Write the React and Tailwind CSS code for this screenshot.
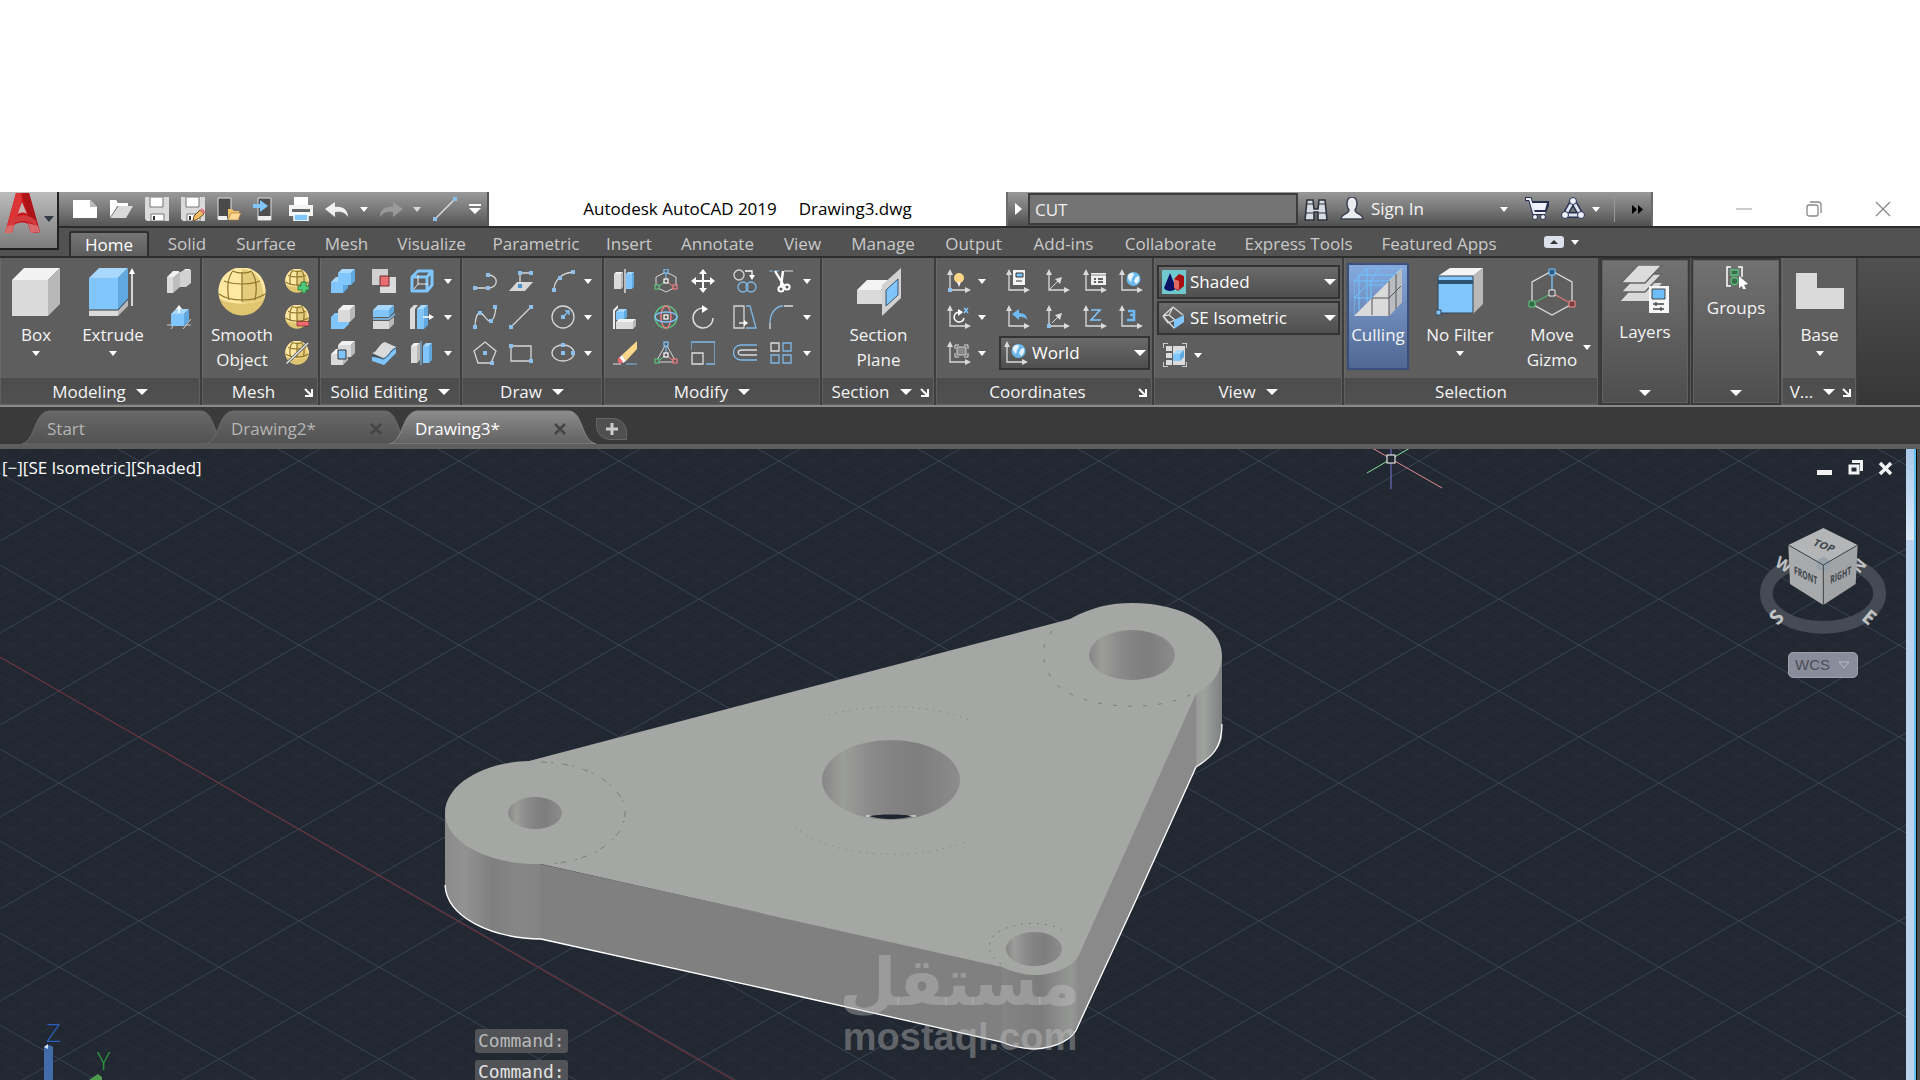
import React from "react";

const BLUE = "#80c5fb";
const LIGHT = "#dadada";

/* ---------- small drawing helpers ---------- */

function Icon({ size = 24, box, children }) {
  return (
    <svg width={size} height={size} viewBox={box || `0 0 ${size} ${size}`} fill="none" className="shrink-0" aria-hidden="true">
      {children}
    </svg>
  );
}

function Node({ x, y, c = "#8cc0ea" }) {
  return <rect x={x - 2} y={y - 2} width="4" height="4" fill={c} />;
}

function Caret({ wide = false, className = "" }) {
  return wide ? (
    <svg width="12" height="6" viewBox="0 0 12 6" className={`shrink-0 ${className}`} aria-hidden="true">
      <path d="M0 0H12L6 6Z" fill="#fff" />
    </svg>
  ) : (
    <svg width="8" height="5" viewBox="0 0 8 5" className={`shrink-0 ${className}`} aria-hidden="true">
      <path d="M0 0H8L4 5Z" fill="#fff" />
    </svg>
  );
}

function Launcher() {
  return (
    <button aria-label="Panel settings" className="flex w-[13px] items-center justify-start">
      <svg width="9" height="9" viewBox="0 0 9 9" fill="none" aria-hidden="true">
        <path d="M1 1L7 7M8 1V8H1" stroke="#fff" strokeWidth="2" />
      </svg>
    </button>
  );
}

function Cube({ x, y, w, h, d, front = LIGHT, top = "#f2f2f2", side = "#b8b8b8" }) {
  return (
    <g>
      <path d={`M${x} ${y + d}H${x + w}V${y + h}H${x}Z`} fill={front} />
      <path d={`M${x} ${y + d}L${x + d} ${y}H${x + w + d}L${x + w} ${y + d}Z`} fill={top} />
      <path d={`M${x + w} ${y + d}L${x + w + d} ${y}V${y + h - d}L${x + w} ${y + h}Z`} fill={side} />
    </g>
  );
}

function BlueCube(props) {
  return <Cube {...props} front={BLUE} top="#a9d8ff" side="#5fa8e0" />;
}

/* ---------- quick access icons ---------- */

const qat = {
  New: (
    <Icon>
      <path d="M0 3H17L24 10V21H0Z" fill="#fff" />
      <path d="M17 3V10H24Z" fill="#b9b9b9" />
    </Icon>
  ),
  Open: (
    <Icon>
      <path d="M1 21V3H7L9 6H19V9H8L3 21Z" fill="#fff" />
      <path d="M9 9H24L17 21H1Z" fill={LIGHT} />
      <path d="M9 9L1 21" stroke="#777" />
    </Icon>
  ),
  Save: (
    <Icon>
      <path d="M0 0H24V24H2L0 22Z" fill={LIGHT} />
      <path d="M5 0H18V10H5Z" fill="#fff" stroke="#777" />
      <path d="M6 17H19V24H6Z" fill="#fff" stroke="#777" />
      <path d="M8 19H10V23H8Z" fill="#333" />
    </Icon>
  ),
  "Save As": (
    <Icon>
      <path d="M0 0H24V24H2L0 22Z" fill={LIGHT} />
      <path d="M5 0H18V10H5Z" fill="#fff" stroke="#777" />
      <path d="M6 17H19V24H6Z" fill="#fff" stroke="#777" />
      <path d="M8 19H10V23H8Z" fill="#333" />
      <path d="M12 24L13 19L19 13L23 17L17 22Z" fill="#f2bd62" stroke="#6a4a20" />
      <path d="M19 13L21 11L25 15L23 17Z" fill="#e8808a" />
    </Icon>
  ),
  "Open from Mobile": (
    <Icon>
      <path d="M1 1H14V22H1Z" fill="#4a4a4a" stroke="#ddd" />
      <path d="M1 19H10V23H1Z" fill="#eee" />
      <path d="M11 23V12H15L17 14H22V23Z" fill="#f3c068" />
      <path d="M14 16H24L21 23H11Z" fill="#ffd993" stroke="#9b7430" strokeWidth=".6" />
    </Icon>
  ),
  "Save to Mobile": (
    <Icon>
      <path d="M5 1H18V23H5Z" fill="#4f4f4f" stroke="#ddd" />
      <path d="M5 19H18V23H5Z" fill="#eee" />
      <path d="M0 7H7V3L15 9L7 15V11H0Z" fill={BLUE} />
    </Icon>
  ),
  Plot: (
    <Icon>
      <path d="M5 0H19V8H5Z" fill="#fff" />
      <path d="M0 8H24V19H0Z" fill="#f4f4f4" />
      <path d="M3 12H21V15H3Z" fill="#666" />
      <path d="M5 17H19V24H5Z" fill={BLUE} stroke="#fff" strokeWidth="1.5" />
    </Icon>
  ),
  Undo: (
    <Icon>
      <path d="M0 12L10 5V10C18 9 23 13 23 20C20 15 16 14 10 15V20Z" fill="#f0f0f0" />
    </Icon>
  ),
  Redo: (
    <Icon>
      <path d="M24 12L14 5V10C6 9 1 13 1 20C4 15 8 14 14 15V20Z" fill="#9a9a9a" />
    </Icon>
  ),
  Line: (
    <Icon>
      <path d="M2 22L23 1" stroke="#ddd" strokeWidth="1.5" />
      <Node x={2} y={22} />
      <Node x={22} y={2} />
    </Icon>
  ),
};

/* ---------- ribbon icons ---------- */

const BoxIcon = (
  <Icon size={48}>
    <Cube x={0} y={0} w={36} h={48} d={12} />
  </Icon>
);
const ExtrudeIcon = (
  <Icon size={48}>
    <Cube x={0} y={31} w={29} h={17} d={10} />
    <BlueCube x={0} y={0} w={29} h={42} d={10} />
    <path d="M0 42H29L39 31" stroke="#3a3a3a" />
    <path d="M43 38V4" stroke="#fff" strokeWidth="1.5" />
    <path d="M43 0L40 6H46Z" fill="#fff" />
  </Icon>
);
const Polysolid = (
  <Icon>
    <path d="M0 8L6 2H12V6L18 0H24L18 3H13L6 9Z" fill="#f2f2f2" />
    <path d="M0 8H6V24H0Z" fill={LIGHT} />
    <path d="M6 9L13 3V18L6 24Z" fill="#bdbdbd" />
    <path d="M13 3L18 1H24V14L19 18H13Z" fill="#d2d2d2" />
  </Icon>
);
const Presspull = (
  <Icon>
    <path d="M0 20H24M4 24L8 18M16 24L24 14" stroke="#ccc" />
    <BlueCube x={4} y={4} w={13} h={17} d={5} />
    <path d="M12 8V3" stroke="#fff" strokeWidth="1.5" />
    <path d="M12 0L9 4H15Z" fill="#fff" />
  </Icon>
);

function Globe({ size, children }) {
  return (
    <Icon size={size} box="0 0 48 48">
      <circle cx="24" cy="24" r="23.5" fill="#e0c570" />
      <path d="M2 31A23.5 23.5 0 1 1 46 31C36 37 12 37 2 31Z" fill="#ffe9a2" />
      <path d="M24 32V1C38 2 45 12 46 31C40 34 32 35 24 35Z" fill="#e4cc7c" />
      <path d="M14 3C22 6 28 6 34 3M6 13C16 17 32 17 42 13M1 26C12 34 36 34 47 26M24 4V34M14 4C9 12 9 22 11 32M34 4C39 12 39 22 37 32" stroke="#8c742c" strokeWidth={size > 24 ? 1.2 : 2.4} />
      {children}
    </Icon>
  );
}

const meshSmall = [
  <Globe key="a" size={24}>
    <path d="M32 26H42V34H48V42H42V48H34V42H26V34H32Z" fill="#4fc878" stroke="#1f6d38" strokeWidth="1.5" />
  </Globe>,
  <Globe key="b" size={24}>
    <path d="M24 33H48V42H24Z" fill="#ec6a70" stroke="#7d2d30" strokeWidth="1.5" />
  </Globe>,
  <Globe key="c" size={24}>
    <path d="M3 45L46 4" stroke="#555" strokeWidth="6" />
    <path d="M3 45L46 4" stroke="#e6e6e6" strokeWidth="3" />
  </Globe>,
];

const solidIcons = [
  <Icon>
    <BlueCube x={0} y={8} w={12} h={16} d={5} />
    <BlueCube x={7} y={0} w={13} h={16} d={4} />
  </Icon>,
  <Icon>
    <path d="M0 0H16V16H0Z" fill="#d0d0d0" />
    <path d="M8 8H24V24H8Z" fill="#dcdcdc" />
    <path d="M8 7H17V17H8Z" fill="#ea6d72" stroke="#6b2b2e" />
  </Icon>,
  <Icon>
    <path d="M2 8H17V22H2ZM2 8L8 2H22L17 8M22 2V16L17 22" stroke={BLUE} strokeWidth="3" strokeLinejoin="round" />
    <path d="M8 6V15H18M8 15L4 20" stroke="#eee" />
  </Icon>,
  <Icon>
    <path d="M0 12L4 8H10V17H15L18 15V19L13 24H0Z" fill={BLUE} />
    <Cube x={7} y={0} w={12} h={17} d={5} />
  </Icon>,
  <Icon>
    <BlueCube x={1} y={0} w={16} h={12} d={5} />
    <path d="M1 14H17L23 9" stroke={BLUE} strokeWidth="1.5" />
    <path d="M1 16H17V24H1Z" fill={LIGHT} />
    <path d="M17 16L22 12V19L17 24Z" fill="#b8b8b8" />
  </Icon>,
  <Icon>
    <path d="M0 4L4 0H8L5 4V24H0Z" fill={LIGHT} />
    <BlueCube x={7} y={0} w={7} h={24} d={4} />
    <path d="M13 12H21" stroke="#fff" strokeWidth="1.5" />
    <path d="M24 12L19 9V15Z" fill="#fff" />
  </Icon>,
  <Icon>
    <Cube x={0} y={8} w={12} h={16} d={5} />
    <Cube x={7} y={0} w={13} h={16} d={4} />
    <path d="M7 9H15V18H7Z" fill={BLUE} stroke="#333" />
  </Icon>,
  <Icon>
    <path d="M0 16L11 17L24 5V12L12 24L0 20Z" fill={BLUE} />
    <path d="M0 12C5 12 7 2 13 1L24 6C18 8 16 16 11 17Z" fill={LIGHT} />
    <path d="M0 14L11 18C16 17 18 10 24 7" stroke="#345" />
  </Icon>,
  <Icon>
    <Cube x={1} y={2} w={6} h={20} d={3} />
    <BlueCube x={13} y={2} w={6} h={20} d={3} />
    <path d="M11 0V24" stroke={BLUE} />
  </Icon>,
];

const S = "#d6d6d6";
const drawIcons = [
  <Icon>
    <path d="M2 19H15C26 19 26 6 15 6" stroke={S} strokeWidth="1.3" />
    <Node x={2} y={19} /><Node x={15} y={19} /><Node x={15} y={6} />
  </Icon>,
  <Icon>
    <path d="M8 13H24L16 22H0Z" fill={S} />
    <path d="M11 18V4H22" stroke={S} strokeWidth="1.3" />
    <Node x={11} y={17} c="#4f8fc4" /><Node x={11} y={4} /><Node x={22} y={4} />
  </Icon>,
  <Icon>
    <path d="M3 21C3 12 10 4 22 3" stroke={S} strokeWidth="1.3" />
    <Node x={3} y={21} /><Node x={9} y={9} /><Node x={22} y={3} />
  </Icon>,
  <Icon>
    <path d="M2 22C2 14 4 8 7 8C11 8 14 18 18 16C22 14 22 8 23 2" stroke={S} strokeWidth="1.3" />
    <Node x={2} y={22} /><Node x={7} y={8} /><Node x={18} y={16} /><Node x={22} y={2} />
  </Icon>,
  <Icon>
    <path d="M2 22L22 2" stroke={S} strokeWidth="1.3" />
    <Node x={2} y={22} /><Node x={22} y={2} />
  </Icon>,
  <Icon>
    <circle cx="12" cy="12" r="11" stroke={S} strokeWidth="1.3" />
    <path d="M12 12L18 6M14 6H18V10" stroke={BLUE} strokeWidth="1.3" />
    <Node x={12} y={12} />
  </Icon>,
  <Icon>
    <path d="M12 1L23 10L18 22H5L1 10Z" stroke={S} strokeWidth="1.3" />
    <Node x={12} y={12} /><Node x={19} y={22} />
  </Icon>,
  <Icon>
    <path d="M2 5H22V20H2Z" stroke={S} strokeWidth="1.3" />
    <Node x={2} y={5} /><Node x={22} y={20} />
  </Icon>,
  <Icon>
    <ellipse cx="12" cy="12" rx="11" ry="8" stroke={S} strokeWidth="1.3" />
    <Node x={12} y={4} /><Node x={12} y={12} /><Node x={22} y={12} />
  </Icon>,
];

function Sq({ x, y, c, f = "#5d5d5d" }) {
  return <rect x={x - 2} y={y - 2} width="4" height="4" stroke={c} fill={f} strokeWidth="1.2" />;
}

const modifyIcons = [
  <Icon>
    <Cube x={1} y={3} w={7} h={17} d={2} />
    <BlueCube x={13} y={3} w={6} h={17} d={2} />
    <path d="M12 0V24" stroke="#eee" strokeWidth="1.3" />
  </Icon>,
  <Icon>
    <path d="M12 3L22 8V18L12 23L2 18V8Z" stroke={S} />
    <path d="M12 12V3" stroke={BLUE} /><path d="M12 12L3 19" stroke="#5ac27c" /><path d="M12 12L21 19" stroke="#ef7d82" />
    <Sq x={12} y={2} c={BLUE} /><Sq x={3} y={18} c="#5ac27c" /><Sq x={21} y={18} c="#ef7d82" /><Sq x={12} y={12} c="#fff" />
  </Icon>,
  <Icon>
    <path d="M12 3V21M3 12H21" stroke="#fff" strokeWidth="2" />
    <path d="M12 0L8 5H16ZM12 24L8 19H16ZM0 12L5 8V16ZM24 12L19 8V16Z" fill="#fff" />
  </Icon>,
  <Icon>
    <circle cx="6" cy="6" r="5" stroke={S} strokeWidth="1.3" />
    <circle cx="10" cy="18" r="5" stroke="#7fb8e6" strokeWidth="1.3" /><circle cx="18" cy="18" r="5" stroke="#7fb8e6" strokeWidth="1.3" />
    <path d="M12 2H19V7" stroke="#fff" strokeWidth="1.3" /><path d="M19 11L16 6H22Z" fill="#fff" />
  </Icon>,
  <Icon>
    <path d="M0 2H10" stroke="#7fb8e6" strokeDasharray="4 2" /><path d="M15 2H24" stroke="#ddd" />
    <path d="M6 2L15 17M14 2L12 17" stroke="#fff" strokeWidth="2.4" />
    <circle cx="12" cy="20" r="2.6" stroke="#fff" strokeWidth="2" /><circle cx="18" cy="18" r="2.6" stroke="#fff" strokeWidth="2" />
  </Icon>,
  <Icon>
    <path d="M0 5L5 0V3L2 6V24H0Z" fill="#eee" />
    <BlueCube x={3} y={4} w={8} h={11} d={3} />
    <Cube x={3} y={14} w={17} h={10} d={3} />
  </Icon>,
  <Icon>
    <circle cx="12" cy="12" r="11" stroke="#5ac27c" strokeWidth="1.4" />
    <ellipse cx="12" cy="12" rx="5" ry="11" stroke="#ef7d82" strokeWidth="1.4" /><ellipse cx="12" cy="12" rx="11" ry="5" stroke={BLUE} strokeWidth="1.4" />
    <Sq x={12} y={12} c="#fff" />
  </Icon>,
  <Icon>
    <path d="M13 3A10 10 0 1 0 22 13" stroke="#ddd" strokeWidth="1.5" />
    <path d="M11 0L17 4L11 8Z" fill="#fff" />
  </Icon>,
  <Icon>
    <path d="M1 1H11V23H1Z" stroke={S} strokeWidth="1.3" /><path d="M13 1H17L23 23H13" stroke="#7fb8e6" strokeWidth="1.3" />
    <path d="M6 18H12" stroke="#fff" strokeWidth="1.3" /><path d="M15 18L11 15V21Z" fill="#fff" />
  </Icon>,
  <Icon>
    <path d="M1 18C1 8 7 1 14 1" stroke="#7fb8e6" strokeWidth="1.3" /><path d="M15 1H24M1 18V24" stroke="#ddd" strokeWidth="1.3" />
  </Icon>,
  <Icon>
    <path d="M0 23H8" stroke="#ddd" /><path d="M13 23H24" stroke="#7fb8e6" />
    <path d="M24 0V8L13 20L9 14Z" fill="#fbd68b" /><path d="M9 14L13 20L10 22L6 17Z" fill="#fff" />
    <path d="M6 16L10 21C8 24 4 22 5 18Z" fill="#ec6a70" />
  </Icon>,
  <Icon>
    <path d="M12 3L22 21H2Z" stroke={S} />
    <path d="M12 14V3" stroke={BLUE} /><path d="M12 14L3 21" stroke="#5ac27c" /><path d="M12 14L21 21" stroke="#ef7d82" />
    <Sq x={12} y={3} c={BLUE} /><Sq x={3} y={20} c="#5ac27c" /><Sq x={21} y={20} c="#ef7d82" /><Sq x={12} y={14} c="#fff" />
  </Icon>,
  <Icon>
    <path d="M0 9V1H24V23H15" stroke="#7fb8e6" strokeWidth="1.3" /><path d="M1 12H12V23H1Z" stroke="#ddd" strokeWidth="1.3" />
  </Icon>,
  <Icon>
    <path d="M24 4H8C-2 4 -2 19 8 19H24" stroke="#7fb8e6" strokeWidth="1.3" /><path d="M24 9H9C4 9 4 14 9 14H24" stroke="#ddd" strokeWidth="1.3" />
  </Icon>,
  <Icon>
    <path d="M2 2H10V10H2Z" stroke="#ddd" strokeWidth="1.3" />
    <path d="M14 2H22V10H14ZM2 14H10V22H2ZM14 14H22V22H14Z" stroke="#7fb8e6" strokeWidth="1.3" />
  </Icon>,
];

function Axes({ children }) {
  return (
    <Icon>
      <path d="M3 4V21H20" stroke={LIGHT} strokeWidth="1.3" />
      <path d="M3 0L0 6H6ZM24 21L18 18V24Z" fill={LIGHT} />
      {children}
    </Icon>
  );
}

function Earth() {
  return (
    <g>
      <circle cx="14.5" cy="10" r="7" fill="#6db9ea" />
      <path d="M9 6C12 3 15 3 15 6L13 9L12 13C10 12 8 8 9 6ZM17 8L20 7C21 11 19 14 17 15L15 12Z" fill="#e4f3ff" />
    </g>
  );
}

const ucsTop = [
  <Axes><circle cx="12" cy="9" r="5" fill="#ffd58a" /><path d="M10 13H14L12 18Z" fill="#f4f4f4" /><Node x={3} y={21} /></Axes>,
  <Caret />,
  <Axes><path d="M7 1H19V16H7Z" fill="#f4f4f4" /><path d="M10 4H17V8H10Z" fill={BLUE} stroke="#333" /><path d="M10 12H16" stroke="#333" /></Axes>,
  <Axes><path d="M3 21L12 12" stroke={LIGHT} /><path d="M16 8L9 10L14 15Z" fill={LIGHT} /></Axes>,
  <Axes><path d="M8 4H23V16H8Z" fill="#f0f0f0" /><path d="M8 6H23" stroke="#888" /><path d="M11 10H13M15 10H20M11 13H13M15 13H20" stroke="#333" strokeWidth="1.5" /></Axes>,
  <Axes><Earth /></Axes>,
  <Axes><path d="M15 8A5 5 0 1 0 17 13" stroke="#fff" strokeWidth="1.5" /><path d="M11 4L16 7L11 11Z" fill="#fff" /><path d="M17 3L21 8M21 3L17 8" stroke={BLUE} strokeWidth="1.5" /></Axes>,
  <Caret />,
  <Axes><path d="M6 9L13 4V8C19 8 21 11 21 15C19 12 17 12 13 12V15Z" fill="#6eb9f2" /></Axes>,
  <Axes><path d="M6 18L12 12" stroke={LIGHT} /><path d="M16 8L9 10L14 15Z" fill={LIGHT} /><Node x={3} y={21} /></Axes>,
  <Axes><path d="M8 5H17L8 15H18" stroke={BLUE} strokeWidth="1.6" /></Axes>,
  <Axes><path d="M9 6H15V10H11H15V15H8" stroke="#6eb9f2" strokeWidth="2.6" /></Axes>,
];
const ucsObject = (
  <Axes>
    <path d="M8 8V4H12M17 4H21V8M8 12V16H12M17 16H21V12" stroke="#ddd" />
    <path d="M10 6H19V14H10Z" fill="#888" stroke="#ccc" />
  </Axes>
);

const SectionIcon = (
  <Icon size={48}>
    <path d="M2 22L12 12H34L26 22Z" fill="#f4f4f4" />
    <path d="M2 22H27V36H2Z" fill={LIGHT} />
    <path d="M27 17L46 0V30L27 48Z" fill="#d2d2d2" />
    <path d="M31 22L43 11V27L31 38Z" fill={BLUE} stroke="#38536b" />
  </Icon>
);
const CullingIcon = (
  <Icon size={48}>
    <path d="M0 48L48 0V34L35 48Z" fill={LIGHT} />
    <path d="M35 48V13L48 0V34Z" fill="#b9bcc0" />
    <path d="M18 30V47M18 30H35M35 48V13M42 41V6M35 30L47 18" stroke="#555" />
    <path d="M0 48V13L13 0H47M0 13H34L47 0M1 30H18M17 13V30M0 30L13 17V0M5 42V7H40M13 17H30M25 0L17 13M13 17V34" stroke="#6fc4ff" />
  </Icon>
);
const FilterIcon = (
  <Icon size={48}>
    <path d="M2 8L14 0H47L37 8Z" fill="#f4f4f4" />
    <path d="M37 8L47 0V36L37 46Z" fill="#b9b9b9" />
    <path d="M2 8H37V45H2Z" fill={BLUE} stroke="#345" />
    <path d="M2 12H37V16H2Z" fill="#2d5372" />
    <path d="M0 42H5V47H0Z" fill={BLUE} stroke="#345" />
  </Icon>
);
const GizmoIcon = (
  <Icon size={48}>
    <path d="M24 3L44 14V36L24 47L4 36V14Z" stroke={LIGHT} strokeWidth="1.3" />
    <path d="M24 25V4" stroke={BLUE} strokeWidth="1.3" /><path d="M24 25L4 36" stroke="#4fae6c" strokeWidth="1.3" /><path d="M24 25L44 36" stroke="#e0757a" strokeWidth="1.3" />
    <path d="M21 1H27V7H21Z" fill="#2f5d86" stroke={BLUE} /><path d="M1 33H7V39H1Z" fill="#2f6b44" stroke="#65c885" />
    <path d="M41 33H47V39H41Z" fill="#7a3e41" stroke="#ef8a8f" /><path d="M21 22H27V28H21Z" fill="#555" stroke="#eee" />
  </Icon>
);
const LayersIcon = (
  <Icon size={48}>
    <path d="M17 18H41L24 36H0Z" fill="#d6d6d6" /><path d="M0 36L8 27H31V36Z" fill={LIGHT} />
    <path d="M17 9H41L24 27H0Z" fill={LIGHT} stroke="#666" strokeWidth="1.5" />
    <path d="M17 0H41L24 18H0Z" fill="#dcdcdc" stroke="#666" strokeWidth="1.5" />
    <path d="M28 21H48V48H28Z" fill="#f6f6f6" />
    <path d="M31 24H44V34H31Z" fill="#6dbdf8" stroke="#444" />
    <path d="M32 39H43M32 44H43M35 37V41M40 42V46" stroke="#444" strokeWidth="1.3" />
  </Icon>
);
const GroupsIcon = (
  <Icon>
    <path d="M7 2H3V21H7M14 2H18V12" stroke="#fff" strokeWidth="1.5" />
    <path d="M7 5H14V10H7Z" stroke="#5ac27c" strokeWidth="1.3" fill="#3c6a4a" /><circle cx="10.5" cy="16" r="3.5" stroke="#5ac27c" strokeWidth="1.3" fill="#3c6a4a" />
    <path d="M15 11L24 19L20 20L22 24L19 25L18 21L15 23Z" fill="#fff" />
  </Icon>
);
const BaseIcon = (
  <Icon size={48}>
    <path d="M0 5H21V20H48V41H0Z" fill={LIGHT} />
  </Icon>
);
const ViewportIcon = (
  <Icon>
    <path d="M0 5V0H5M19 0H24V5M0 19V24H5M19 24H24V19" stroke="#eee" strokeWidth="1.5" />
    <path d="M3 3H9V8H3ZM3 10H9V15H3ZM3 17H9V22H3ZM10 3H22V22H10Z" fill="#dcdcdc" />
    <BlueCube x={10} y={7} w={7} h={11} d={4} />
  </Icon>
);
const ShadedIcon = (
  <Icon>
    <rect width="24" height="24" fill="#6fc8cb" />
    <path d="M8 3L14 18C12 22 4 22 2 18Z" fill="#0b1266" />
    <path d="M12 9L17 4L22 6V16L16 21L12 18Z" fill="#a80d10" /><path d="M12 9L17 11V20L12 18Z" fill="#e06a64" />
  </Icon>
);
const IsoIcon = (
  <Icon>
    <path d="M1 10L11 1L21 9M1 10L12 22M1 10L7 9L11 1M7 9L13 14M1 10L6 17L13 14" stroke={LIGHT} strokeWidth="1.3" />
    <path d="M12 14L22 9V16L12 23Z" fill={BLUE} />
  </Icon>
);

/* ---------- ribbon parts ---------- */

function Panel({ title, width, menu = true, launcher = false, children }) {
  return (
    <section className={`flex shrink-0 flex-col border-r-2 border-[#3d3d3d] bg-[#5e5e5e] ${width}`}>
      <div className="flex flex-1 border-l border-[#696969]">{children}</div>
      <div className="flex h-[28px] border border-[#606060] bg-gradient-to-b from-[#4c4c4c] to-[#515151] pt-[2px]">
        <button className="flex min-w-0 flex-1 items-center justify-center gap-[10px] whitespace-nowrap">
          {title}
          {menu && <Caret wide />}
        </button>
        {launcher && <Launcher />}
      </div>
    </section>
  );
}

function BigTool({ icon, lines, width, caret = false }) {
  return (
    <button className={`flex flex-col items-center self-start pt-[10px] leading-[25px] ${width}`}>
      {icon}
      <span className="mt-[6px] flex flex-col">
        {lines.map((l) => (
          <span key={l}>{l}</span>
        ))}
      </span>
      {caret && <Caret className="mt-[4px]" />}
    </button>
  );
}

function ToolGrid({ items, cols, label, className = "" }) {
  return (
    <div className={`grid auto-rows-[24px] content-start items-center gap-y-[12px] pt-[11px] ${cols} ${className}`}>
      {items.map((it, i) => (
        <button key={i} aria-label={`${label} ${i + 1}`} className="justify-self-start">
          {it}
        </button>
      ))}
    </div>
  );
}

function withCarets(icons, n) {
  const out = [];
  icons.forEach((ic, i) => {
    out.push(ic);
    if (i % n === n - 1) out.push(<Caret />);
  });
  return out;
}

function Dropdown({ icon, value, label, width }) {
  return (
    <div className={`relative h-[34px] ${width}`}>
      <select aria-label={label} defaultValue={value} className="h-full w-full appearance-none border-2 border-[#333] bg-gradient-to-b from-[#6a6a6a] to-[#4f4f4f] pl-[31px] text-white">
        <option>{value}</option>
      </select>
      <span className="pointer-events-none absolute left-[5px] top-[5px]">{icon}</span>
      <Caret wide className="pointer-events-none absolute right-[4px] top-[14px]" />
    </div>
  );
}

function CollapsedPanel({ icon, label }) {
  return (
    <section className="flex w-[91px] shrink-0 border-r border-[#5a5a5a] bg-[#3a3a3a] px-[2px] pb-[2px] pt-[2px]">
      <button className="flex w-full flex-col items-center border border-[#606060] bg-gradient-to-b from-[#727272] to-[#4e4e4e] pt-[4px]">
        {icon}
        <span className="mt-[6px] leading-[25px]">{label}</span>
        <Caret wide className="mb-[6px] mt-auto" />
      </button>
    </section>
  );
}

function Ribbon() {
  return (
    <div className="flex h-[147px] overflow-hidden bg-gradient-to-b from-[#505050] to-[#363636] text-[17px] text-[#f4f4f4]">
      <Panel title="Modeling" width="w-[202px]">
        <BigTool icon={BoxIcon} lines={["Box"]} width="w-[70px]" caret />
        <BigTool icon={ExtrudeIcon} lines={["Extrude"]} width="w-[84px]" caret />
        <ToolGrid label="Modeling tool" cols="grid-cols-[24px]" className="ml-[12px]" items={[Polysolid, Presspull]} />
      </Panel>
      <Panel title="Mesh" width="w-[118px]" menu={false} launcher>
        <BigTool icon={<Globe size={48} />} lines={["Smooth", "Object"]} width="w-[78px]" />
        <ToolGrid label="Mesh tool" cols="grid-cols-[24px]" className="ml-[4px]" items={meshSmall} />
      </Panel>
      <Panel title="Solid Editing" width="w-[142px]">
        <ToolGrid label="Solid editing tool" cols="grid-cols-[41px_38px_34px_8px]" className="ml-[10px]" items={withCarets(solidIcons, 3)} />
      </Panel>
      <Panel title="Draw" width="w-[142px]">
        <ToolGrid label="Draw tool" cols="grid-cols-[36px_42px_33px_8px]" className="ml-[10px]" items={withCarets(drawIcons, 3)} />
      </Panel>
      <Panel title="Modify" width="w-[218px]">
        <ToolGrid label="Modify tool" cols="grid-cols-[41px_37px_42px_36px_34px_8px]" className="ml-[8px]" items={withCarets(modifyIcons, 5)} />
      </Panel>
      <Panel title="Section" width="w-[114px]" launcher>
        <BigTool icon={SectionIcon} lines={["Section", "Plane"]} width="w-[112px]" />
      </Panel>
      <Panel title="Coordinates" width="w-[218px]" menu={false} launcher>
        <div className="ml-[10px]">
          <ToolGrid label="Coordinates tool" cols="grid-cols-[31px_28px_40px_37px_36px_24px]" items={ucsTop} />
          <div className="flex pt-[7px]">
            <button aria-label="Object coordinates" className="w-[31px]">{ucsObject}</button>
            <button aria-label="More coordinate tools" className="w-[21px]"><Caret /></button>
            <Dropdown label="Coordinate system" value="World" width="w-[151px]" icon={<Axes><Earth /></Axes>} />
          </div>
        </div>
      </Panel>
      <Panel title="View" width="w-[190px]">
        <div className="mx-[2px] flex flex-1 flex-col gap-[2px] pt-[7px]">
          <Dropdown label="Visual style" value="Shaded" width="w-full" icon={ShadedIcon} />
          <Dropdown label="View direction" value="SE Isometric" width="w-full" icon={IsoIcon} />
          <button aria-label="Viewports" className="ml-[6px] mt-[6px] flex items-center gap-[7px] self-start">
            {ViewportIcon}
            <Caret />
          </button>
        </div>
      </Panel>
      <Panel title="Selection" width="w-[256px]" menu={false}>
        <button className="ml-[2px] mt-[5px] flex h-[107px] w-[62px] flex-col items-center border-2 border-[#3a4f7a] bg-gradient-to-b from-[#86aadf] to-[#506791] pt-[3px]">
          {CullingIcon}
          <span className="mt-[6px] leading-[25px]">Culling</span>
        </button>
        <BigTool icon={FilterIcon} lines={["No Filter"]} width="w-[102px]" caret />
        <div className="flex flex-1">
          <BigTool icon={GizmoIcon} lines={["Move", "Gizmo"]} width="w-[82px]" />
          <button aria-label="Gizmo options" className="-ml-[10px] mt-[60px] self-center"><Caret /></button>
        </div>
      </Panel>
      <CollapsedPanel icon={LayersIcon} label="Layers" />
      <CollapsedPanel icon={GroupsIcon} label="Groups" />
      <Panel title="V..." width="w-[76px]" launcher>
        <BigTool icon={BaseIcon} lines={["Base"]} width="w-[76px]" caret />
      </Panel>
    </div>
  );
}

/* ---------- title bar ---------- */

const tabs = [
  ["Home", "w-[80px] mr-[3px]"],
  ["Solid", "w-[70px]"],
  ["Surface", "w-[88px]"],
  ["Mesh", "w-[73px]"],
  ["Visualize", "w-[97px]"],
  ["Parametric", "w-[112px]"],
  ["Insert", "w-[74px]"],
  ["Annotate", "w-[103px]"],
  ["View", "w-[67px]"],
  ["Manage", "w-[94px]"],
  ["Output", "w-[87px]"],
  ["Add-ins", "w-[93px]"],
  ["Collaborate", "w-[121px]"],
  ["Express Tools", "w-[135px]"],
  ["Featured Apps", "w-[146px]"],
];

function TitleBar() {
  return (
    <div className="flex h-[36px] items-stretch border-b-2 border-[#2c2c2c] bg-white text-[17px]">
      <div className="flex w-[430px] shrink-0 items-center border-r-2 border-[#555] bg-gradient-to-b from-[#9a9a9a] via-[#7a7a7a] to-[#565656] pl-[14px]">
        {["New", "Open", "Save", "Save As", "Open from Mobile", "Save to Mobile", "Plot", "Undo"].map((n) => (
          <button key={n} aria-label={n} className="mr-[12px]">{qat[n]}</button>
        ))}
        <button aria-label="Undo list" className="-ml-[1px]"><Caret /></button>
        <button aria-label="Redo" className="ml-[11px]">{qat.Redo}</button>
        <button aria-label="Redo list" className="ml-[10px] opacity-70"><Caret /></button>
        <button aria-label="Line" className="ml-[12px]">{qat.Line}</button>
        <button aria-label="Customize toolbar" className="ml-[12px]">
          <svg width="12" height="10" viewBox="0 0 12 10" aria-hidden="true"><path d="M0 0H12V2H0ZM0 4H12L6 10Z" fill="#fff" /></svg>
        </button>
      </div>
      <h1 className="flex min-w-0 flex-1 items-center justify-center gap-[22px] overflow-hidden whitespace-nowrap text-black">
        <span>Autodesk AutoCAD 2019</span>
        <span>Drawing3.dwg</span>
      </h1>
      <div className="flex w-[647px] shrink-0 items-center border-x-2 border-[#6b6b6b] bg-gradient-to-b from-[#989898] via-[#777] to-[#505050] text-[#f4f4f4]">
        <button aria-label="Collapse search" className="flex w-[20px] justify-center">
          <svg width="7" height="12" viewBox="0 0 7 12" aria-hidden="true"><path d="M0 0L7 6L0 12Z" fill="#fff" /></svg>
        </button>
        <input aria-label="Search" defaultValue="CUT" className="h-[32px] w-[270px] border-2 border-[#3c3c3c] bg-[#747474] px-[5px] text-[#eee]" />
        <button aria-label="Find" className="ml-[6px]">
          <Icon>
            <path d="M3 3H9L10 12H14L15 3H21L23 23H14V15H10V23H1Z" fill="#d8dde4" stroke="#2e333d" strokeWidth="1.6" />
            <path d="M2 16H9M15 16H22M3 7H9M15 7H21" stroke="#2e333d" />
          </Icon>
        </button>
        <button className="ml-[12px] flex flex-1 items-center gap-[7px]">
          <Icon>
            <path d="M12 0C18 0 18 9 15 13C15 17 23 17 23 22H1C1 17 9 17 9 13C6 9 6 0 12 0Z" fill="#e9edf2" stroke="#3b4250" strokeWidth="1.5" />
          </Icon>
          <span className="flex-1 text-left">Sign In</span>
          <Caret />
        </button>
        <button aria-label="App store" className="ml-[17px]">
          <Icon>
            <path d="M0 2H5L9 16H20M6 6H23L20 13H8" stroke="#283052" strokeWidth="4" />
            <path d="M6 6H22L20 13H9Z" fill="#eef1fa" /><path d="M1 2H5L9 16H20" stroke="#eef1fa" strokeWidth="2" />
            <circle cx="10" cy="20" r="2.5" fill="#eef1fa" stroke="#283052" /><circle cx="18" cy="20" r="2.5" fill="#eef1fa" stroke="#283052" />
          </Icon>
        </button>
        <button aria-label="Stay connected" className="ml-[12px] flex items-center gap-[7px]">
          <Icon>
            <path d="M12 4L20 18H4Z" stroke="#283052" strokeWidth="6" strokeLinejoin="round" />
            <path d="M12 4L20 18H4Z" stroke="#dfe4f2" strokeWidth="3" />
            <circle cx="12" cy="4" r="3.5" fill="#eef1fa" stroke="#283052" /><circle cx="4" cy="18" r="3.5" fill="#eef1fa" stroke="#283052" /><circle cx="20" cy="18" r="3.5" fill="#eef1fa" stroke="#283052" />
          </Icon>
          <Caret />
        </button>
        <span className="ml-[14px] h-[26px] w-px bg-[#999]" />
        <button aria-label="More" className="ml-[17px] mr-[8px]">
          <svg width="11" height="9" viewBox="0 0 11 9" aria-hidden="true"><path d="M0 0L5 4.5L0 9ZM6 0L11 4.5L6 9Z" fill="#000" /></svg>
        </button>
      </div>
      <div className="flex w-[267px] shrink-0 items-center justify-between pl-[83px] pr-[29px]">
        <button aria-label="Minimize"><Icon size={16}><path d="M0 8H16" stroke="#999" /></Icon></button>
        <button aria-label="Restore">
          <Icon size={16}><rect x="1" y="4" width="11" height="11" rx="2" stroke="#888" strokeWidth="1.3" /><path d="M4 1H12Q15 1 15 4V12" stroke="#888" strokeWidth="1.3" /></Icon>
        </button>
        <button aria-label="Close"><Icon size={16}><path d="M1 1L15 15M15 1L1 15" stroke="#888" strokeWidth="1.3" /></Icon></button>
      </div>
    </div>
  );
}

function Header() {
  return (
    <header className="flex border-b-2 border-[#2c2c2c] bg-[#525252]">
      <button aria-label="Application menu" className="flex h-[58px] w-[59px] shrink-0 items-center gap-[3px] border-b-2 border-r-2 border-[#222] bg-gradient-to-b from-[#bcbcbc] to-[#7d7d7d] pb-[14px] pl-[4px]">
        <svg width="37" height="42" viewBox="0 0 37 42" fill="none" aria-hidden="true" className="shrink-0">
          <path d="M12 1H25L36 40L27 41L24 32C18 29 13 31 10 33L8 41H1Z" fill="#c8171c" />
          <path d="M18 10L13 23C16 20 20 20 23 22Z" fill="#c9b3b3" />
          <path d="M12 1L1 41L8 41L18 8L17 1Z" fill="#dd3436" />
          <path d="M25 1L36 40L30 41L18 3Z" fill="#ad1418" />
          <path d="M5 31C13 21 24 21 32 29L34 36C24 26 14 28 4 35Z" fill="#d23a3d" />
          <path d="M3 34L1 41H8L10 33ZM24 31L27 41L36 40L34 34Z" fill="#d86a6c" />
        </svg>
        <svg width="10" height="6" viewBox="0 0 10 6" aria-hidden="true" className="mt-[12px]"><path d="M0 0H10L5 6Z" fill="#333b45" /></svg>
      </button>
      <div className="min-w-0 flex-1">
        <TitleBar />
        <nav className="flex h-[28px] items-end overflow-hidden whitespace-nowrap pl-[10px] text-[17px] text-[#c9c9c9]">
          {tabs.map(([t, w], i) => (
            <a key={t} href={`#${t}`} className={`flex h-[25px] shrink-0 items-center justify-center pt-px ${w} ${i === 0 ? "rounded-t-[3px] border-2 border-b-0 border-[#2e2e2e] bg-gradient-to-b from-[#757575] to-[#5e5e5e] text-white" : ""}`}>
              {t}
            </a>
          ))}
          <button aria-label="Ribbon display" className="mb-[8px] ml-[32px] flex items-center gap-[7px]">
            <svg width="20" height="12" viewBox="0 0 20 12" aria-hidden="true"><rect width="20" height="12" rx="3" fill="#dde1ec" /><path d="M6 8L10 4L14 8Z" fill="#333" /></svg>
            <Caret />
          </button>
        </nav>
      </div>
    </header>
  );
}

/* ---------- document tabs ---------- */

function DocTab({ label, active = false, closable = true }) {
  return (
    <div className="relative -mr-[22px] flex h-[34px] w-[206px] items-center pl-[25px] pr-[30px] pt-[3px]">
      <svg className="absolute inset-0 h-full w-full" viewBox="0 0 206 34" preserveAspectRatio="none" aria-hidden="true">
        <defs>
          <linearGradient id={active ? "tab-on" : "tab-off"} x1="0" y1="0" x2="0" y2="1">
            <stop offset="0" stopColor={active ? "#8c8c8c" : "#686868"} />
            <stop offset="1" stopColor={active ? "#616161" : "#525252"} />
          </linearGradient>
        </defs>
        <path d="M0 34C14 30 12 1 28 1H178C194 1 190 30 206 34Z" fill={active ? "url(#tab-on)" : "url(#tab-off)"} stroke={active ? "#8a8a8a" : "#6c6c6c"} />
      </svg>
      <button className={`relative flex-1 text-left ${active ? "text-white" : "text-[#b5b5b5]"}`}>{label}</button>
      {closable && (
        <button aria-label={`Close ${label}`} className="relative">
          <svg width="12" height="12" viewBox="0 0 12 12" aria-hidden="true"><path d="M1 1L11 11M11 1L1 11" stroke="#444" strokeWidth="2.5" /></svg>
        </button>
      )}
    </div>
  );
}

function DocTabs() {
  return (
    <div className="flex h-[44px] items-end border-b-[5px] border-t-2 border-b-[#5e5e5e] border-t-[#8a8a8a] bg-[#3a3a3a] pl-[22px] text-[17px]">
      <DocTab label="Start" closable={false} />
      <DocTab label="Drawing2*" />
      <DocTab label="Drawing3*" active />
      <button aria-label="New drawing" className="mb-[4px] ml-[22px] flex h-[22px] w-[31px] items-center justify-center rounded-bl-[14px] rounded-tr-[14px] border border-[#666] bg-[#505050]">
        <svg width="12" height="12" viewBox="0 0 12 12" aria-hidden="true"><path d="M6 0V12M0 6H12" stroke="#ccc" strokeWidth="3" /></svg>
      </button>
    </div>
  );
}

/* ---------- drawing area ---------- */

const minorLines = [32, 64, 96, 128]
  .map((x) => {
    const y = (x * 92) / 160;
    return `M${x} 0L160 ${92 - y}M0 ${92 - y}L${x} 92M${x} 0L0 ${y}M160 ${y}L${x} 92`;
  })
  .join("");

function Stops({ list }) {
  return list.map(([o, c]) => <stop key={o} offset={o} stopColor={c} />);
}

function Scene() {
  return (
    <svg className="absolute inset-0 h-full w-full" aria-label="Shaded bracket model">
      <defs>
        <pattern id="grid" x="59" y="507" width="160" height="92" patternUnits="userSpaceOnUse">
          <path d={minorLines} stroke="#272d38" fill="none" />
          <path d="M0 0L160 92M160 0L0 92" stroke="#3a4252" fill="none" />
        </pattern>
        <linearGradient id="hole"><Stops list={[[0, "#868686"], [0.15, "#9b9d9a"], [0.35, "#8b8b8b"], [0.5, "#838383"], [0.7, "#7e7e7e"], [1, "#8c8c8c"]]} /></linearGradient>
        <linearGradient id="lug-left"><Stops list={[[0, "#8a8b8a"], [0.2, "#919291"], [0.5, "#7f7f7f"], [0.75, "#868686"], [1, "#848484"]]} /></linearGradient>
        <linearGradient id="lug-right"><Stops list={[[0, "#989a98"], [0.3, "#a0a2a0"], [1, "#7e807f"]]} /></linearGradient>
        <linearGradient id="lug-front"><Stops list={[[0, "#848484"], [0.5, "#7c7c7c"], [0.9, "#959795"], [1, "#8b8c8b"]]} /></linearGradient>
      </defs>
      <g transform="translate(0 -449)">
        <rect y="449" width="100%" height="100%" fill="url(#grid)" />
        <path d="M0 657L1000 1234" stroke="#7c2f37" />
        <path d="M445 813V888C447 917 490 938 541 939V864Z" fill="url(#lug-left)" />
        <path d="M540 864L1002 966V1042L540 939Z" fill="#808080" />
        <path d="M1002 950H1079V1022C1072 1042 1050 1049 1034 1049C1020 1048 1010 1045 1002 1042Z" fill="url(#lug-front)" />
        <path d="M1196 692V767L1136 900L1078 1026V955Z" fill="#8a8a8a" />
        <path d="M1196 692L1222 655V738C1220 748 1212 756 1196 767Z" fill="url(#lug-right)" />
        <path d="M529 761L1070 619C1092 607 1110 603 1132 603C1184 603 1222 627 1222 655C1222 671 1214 684 1196 694L1079 955C1073 967 1055 975 1034 975C1022 975 1011 971 1002 967L541 864C488 865 445 842 445 813C445 785 482 762 529 761Z" fill="#a5a7a4" />
        <path d="M445 885C447 917 490 938 541 939L780 992L1002 1042C1010 1046 1020 1048 1034 1049C1058 1048 1074 1038 1078 1026L1136 900L1196 767C1212 757 1222 748 1222 724" stroke="#fff" strokeWidth="1.3" fill="none" />
        <ellipse cx="535" cy="813" rx="27" ry="16" fill="url(#hole)" />
        <ellipse cx="891" cy="780" rx="69" ry="40" fill="url(#hole)" />
        <ellipse cx="1132" cy="655" rx="43" ry="25" fill="url(#hole)" />
        <ellipse cx="1034" cy="949" rx="28" ry="17" fill="url(#hole)" />
        <path d="M866 816H916" stroke="#fff" />
        <path d="M869 816C880 814 902 814 912 816C902 820 880 820 869 816Z" fill="#1d242d" />
        <g stroke="#7c7e7c" fill="none">
          <path d="M541 762C590 763 625 787 625 813C625 840 590 862 548 864" strokeDasharray="6 4 2 9" />
          <path d="M829 715C870 703 930 703 971 721M795 827C830 858 920 864 975 838" strokeDasharray="1 6" />
          <path d="M1052 631C1040 645 1040 665 1056 684C1080 708 1150 714 1190 695" strokeDasharray="4 11" />
          <path d="M1001 964C986 955 986 940 998 932C1016 921 1048 921 1062 930" strokeDasharray="2 6" />
        </g>
        <path d="M1372 448L1442 488" stroke="#e58b91" />
        <path d="M1367 473L1410 448" stroke="#86dd97" />
        <path d="M1391 448V489" stroke="#7779d8" />
        <rect x="1387" y="455" width="8" height="8" fill="#222831" stroke="#fff" />
        <text x="46" y="1042" fill="#2c5fb8" fontSize="26" fontFamily="'Open Sans', sans-serif" fontWeight="300">Z</text>
        <path d="M44 1047Q48 1043 53 1047V1090H44Z" fill="#426bab" /><path d="M44 1047L48 1044V1049Z" fill="#cfe3fb" />
        <text x="97" y="1070" fill="#2f9c3e" fontSize="25" fontFamily="'Open Sans', sans-serif" fontWeight="300">Y</text>
        <path d="M86 1082L98 1074L102 1077V1090H86Z" fill="#4c9c4c" />
        <g fill="#c8c8c8" fillOpacity="0.38" fontWeight="700" textAnchor="middle">
          <text x="960" y="1005" fontSize="66" fontFamily="'DejaVu Sans', sans-serif" direction="rtl">مستقل</text>
          <text x="960" y="1050" fontSize="38" fontFamily="'Liberation Sans', sans-serif">mostaql.com</text>
        </g>
      </g>
    </svg>
  );
}

function ViewCube() {
  return (
    <div className="absolute right-0 top-0 h-[240px] w-[186px]">
      <svg width="186" height="210" viewBox="0 27 558 630" fontFamily="'Open Sans', sans-serif" fontWeight="700" textAnchor="middle" aria-label="View cube">
        <ellipse cx="309" cy="460" rx="170" ry="102" fill="none" stroke="#454b54" strokeWidth="38" />
        <g fill="#c0c2c3" fontSize="48">
          <text transform="translate(182 388) rotate(30)">W</text>
          <text transform="translate(430 388) rotate(-50)">N</text>
          <text transform="translate(184 546) rotate(-45)" fontSize="60">S</text>
          <text transform="translate(434 548) rotate(40)" fontSize="60">E</text>
        </g>
        <path d="M205 315L310 375V495L210 432Z" fill="#a9aaab" />
        <path d="M413 315L310 375V495L407 432Z" fill="#a2a3a4" />
        <path d="M310 264L413 315L310 375L205 315Z" fill="#b4b5b6" />
        <path d="M290 362L310 350L330 362V384L310 394L290 384Z" fill="#97a2ad" />
        <path d="M205 315L310 375L413 315M310 375V495" stroke="#444" strokeWidth="3" fill="none" />
        <g fill="#3c434c" fontSize="33">
          <text transform="matrix(.9 .35 -.55 .75 306 326)">TOP</text>
          <text transform="matrix(.62 .3 0 1 257 418)">FRONT</text>
          <text transform="matrix(.62 -.3 0 1 362 417)">RIGHT</text>
        </g>
      </svg>
      <div className="absolute right-[12px] top-[11px] flex gap-[15px]">
        <button aria-label="Minimize drawing"><Icon size={16}><path d="M1 10H16V15H1Z" fill="#f2f2f2" /></Icon></button>
        <button aria-label="Restore drawing"><Icon size={16}><path d="M5 0H16V11H13V3H5Z" fill="#f2f2f2" /><path d="M3 6H11V13H3Z" stroke="#f2f2f2" strokeWidth="3" /></Icon></button>
        <button aria-label="Close drawing"><Icon size={16}><path d="M2 3L13 14M13 3L2 14" stroke="#f2f2f2" strokeWidth="3.5" /></Icon></button>
      </div>
      <button className="absolute left-[68px] top-[203px] flex h-[26px] w-[70px] items-center gap-[8px] rounded-[5px] border border-[#9b9fae] bg-[#898c9a] pl-[6px] font-['Liberation_Sans',sans-serif] text-[15px] text-[#4b4e59]">
        WCS
        <svg width="12" height="8" viewBox="0 0 12 8" fill="none" aria-hidden="true"><path d="M1 1H11L6 7Z" stroke="#b9bcc8" /></svg>
      </button>
    </div>
  );
}

function Viewport() {
  return (
    <main className="flex flex-1 overflow-hidden">
      <div className="relative min-w-0 flex-1 overflow-hidden bg-[#222831]">
        <Scene />
        <div className="absolute left-[2px] top-[7px] text-[17px] leading-[24px] text-white">[−][SE Isometric][Shaded]</div>
        <ViewCube />
        <div className="absolute left-[475px] top-[580px] flex flex-col gap-[7px] font-['DejaVu_Sans_Mono',monospace] text-[18px] leading-[24px]">
          <span className="rounded-[3px] bg-[#515356] px-[3px] text-[#b9b9b9]">Command:</span>
          <span className="rounded-[3px] bg-[#515356] px-[3px] text-[#e2e2e2]">Command:</span>
        </div>
      </div>
      <div className="flex w-[14px] shrink-0 bg-[#4e4e4e]">
        <div className="w-[10px] border-r-2 border-[#5cc3ee] bg-[#bcd2ec]">
          <div className="h-[91px] bg-gradient-to-b from-[#a9c8ea] to-[#dce9f7]" />
        </div>
        <div className="w-px bg-black" />
      </div>
    </main>
  );
}

export default function App() {
  return (
    <div className="flex h-screen flex-col overflow-hidden bg-white pt-[192px] font-['Open_Sans','Noto_Sans',sans-serif]">
      <Header />
      <Ribbon />
      <DocTabs />
      <Viewport />
    </div>
  );
}
